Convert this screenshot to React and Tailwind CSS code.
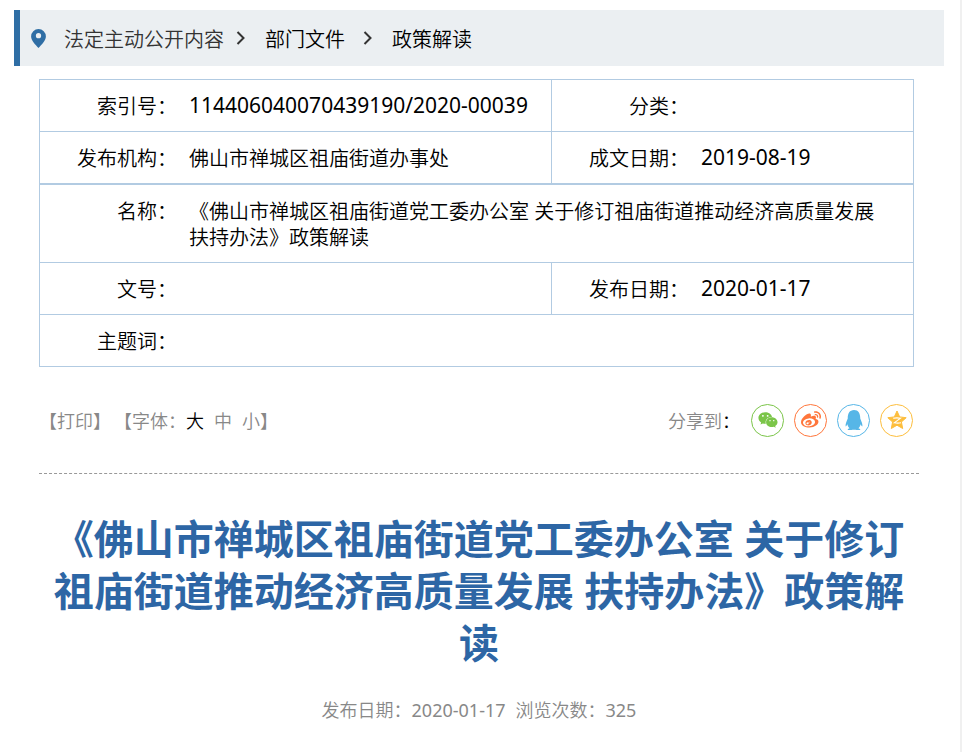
import React from 'react';
import { FaWeixin, FaWeibo, FaQq } from 'react-icons/fa';

const title = '《佛山市禅城区祖庙街道党工委办公室 关于修订祖庙街道推动经济高质量发展 扶持办法》政策解读';

const PinIcon = () => (
  <svg className="w-[15px] h-[19px] shrink-0" viewBox="0 0 14 18" fill="#2f6ea5" aria-hidden="true">
    <path fillRule="evenodd" d="M7 0a7 7 0 0 0-7 7c0 4 4 7.500 7 11 3-3.500 7-7 7-11a7 7 0 0 0-7-7zm0 3.800a2.500 2.500 0 1 1 0 5 2.500 2.500 0 0 1 0-5z" />
  </svg>
);

const Chevron = () => (
  <svg className="w-[9px] h-[14px] mx-3 shrink-0" viewBox="0 0 9 14" fill="none" stroke="#333" strokeWidth="2" aria-hidden="true">
    <path d="M1.500 1l6 6-6 6" />
  </svg>
);

const QzoneIcon = ({ className }) => (
  <svg className={className} viewBox="0 0 20 20" aria-hidden="true">
    <path
      fill="currentColor"
      stroke="currentColor"
      strokeWidth="1"
      strokeLinejoin="round"
      d="M10 1l2.700 5.900 6.500.8-4.800 4.300 1.300 6.500L10 15.200l-5.700 3.300L5.600 12 .8 7.700l6.500-.8z"
    />
    <path fill="none" stroke="#fff" strokeWidth="1.100" d="M6.200 8.200c2.600-.4 5-.4 7.400 0L7.200 12.800c2.600.4 4.500.4 6.800 0" />
  </svg>
);

const Label = ({ children }) => (
  <th scope="row" className="pt-[14px] pb-[10px] pl-3 text-right align-top font-[350] whitespace-nowrap border-b border-[#b2cbe2]">
    {children}
  </th>
);

const share = [
  { name: '微信', icon: FaWeixin, color: 'border-[#7bc549] text-[#7bc549]' },
  { name: '新浪微博', icon: FaWeibo, color: 'border-[#ff763b] text-[#ff763b]' },
  { name: 'QQ', icon: FaQq, color: 'border-[#56b6e7] text-[#56b6e7]' },
  { name: 'QQ空间', icon: QzoneIcon, color: 'border-[#fdbe3d] text-[#fdbe3d]' },
];

const App = () => {
  return (
    <div className="min-h-screen bg-white border-r-2 border-[#f0f0f0] pt-[10px] pl-[14px] pr-4 pb-7 font-['Noto_Sans','Noto_Sans_CJK_SC',sans-serif] text-black">
      {/* Breadcrumb */}
      <nav aria-label="当前位置" className="flex items-center h-14 pl-[11px] bg-[#ebeff2] border-l-[6px] border-[#2f6ea5] text-xl font-[350]">
        <PinIcon />
        <a href="#" className="ml-[18px] pt-[3px] text-[#333]">法定主动公开内容</a>
        <Chevron />
        <a href="#" className="ml-2 pt-[3px]">部门文件</a>
        <span className="ml-1.5"><Chevron /></span>
        <a href="#" className="ml-2 pt-[3px]">政策解读</a>
      </nav>

      <main className="pl-[25px] pr-[25px]">
        {/* Document info */}
        <div className="mt-[13px] pr-[5px]">
          <table className="w-full table-fixed border-separate border-spacing-0 border-t border-x border-[#b2cbe2] text-xl leading-[26px]">
            <colgroup>
              <col className="w-[137px]" />
              <col />
              <col className="w-[137px]" />
              <col className="w-[224px]" />
            </colgroup>
            <tbody>
              <tr className="h-[52px]">
                <Label>索引号：</Label>
                <td className="py-3 pl-3 align-top text-[21px] border-b border-r border-[#b2cbe2]">114406040070439190/2020-00039</td>
                <Label>分类：</Label>
                <td className="border-b border-[#b2cbe2]" />
              </tr>
              <tr className="h-[52px]">
                <Label>发布机构：</Label>
                <td className="pt-[14px] pb-[10px] pl-3 align-top font-[350] border-b border-r border-[#b2cbe2]">佛山市禅城区祖庙街道办事处</td>
                <Label>成文日期：</Label>
                <td className="py-3 pl-3 align-top text-[21px] border-b border-[#b2cbe2]">2019-08-19</td>
              </tr>
              <tr className="h-[79px]">
                <th scope="row" className="pt-[14px] pb-[10px] pl-3 text-right align-top font-[350] border-y border-[#b2cbe2]">名称：</th>
                <td colSpan={3} className="pt-[14px] pb-[10px] pl-3 pr-5 align-top font-[350] border-y border-[#b2cbe2]">{title}</td>
              </tr>
              <tr className="h-[52px]">
                <Label>文号：</Label>
                <td className="border-b border-r border-[#b2cbe2]" />
                <Label>发布日期：</Label>
                <td className="py-3 pl-3 align-top text-[21px] border-b border-[#b2cbe2]">2020-01-17</td>
              </tr>
              <tr className="h-[52px]">
                <Label>主题词：</Label>
                <td colSpan={3} className="border-b border-[#b2cbe2]" />
              </tr>
            </tbody>
          </table>
        </div>

        {/* Print, font size and share tools */}
        <div className="flex items-center justify-between h-[107px] pr-[6px] border-b border-dashed border-[#999] text-lg font-[350] text-[#888]">
          <div className="flex items-center pt-0.5">
            <button type="button">【打印】</button>
            <span className="ml-[3px]">【字体：</span>
            <button type="button" className="text-black">大</button>
            <button type="button" className="ml-[10px]">中</button>
            <button type="button" className="ml-[10px]">小</button>
            <span>】</span>
          </div>
          <div className="flex items-center">
            <span className="pt-0.5">分享到</span>
            <span className="pt-0.5 text-black">：</span>
            <div className="ml-[11px] flex gap-[10px]">
              {share.map(({ name, icon: Icon, color }) => (
                <a key={name} href="#" aria-label={name} className={`size-[33px] rounded-full border flex items-center justify-center ${color}`}>
                  <Icon className="size-5" />
                </a>
              ))}
            </div>
          </div>
        </div>

        {/* Article heading */}
        <h1 className="mt-[39px] text-center text-[40px] leading-[52px] font-bold text-[#2d66a5]">{title}</h1>
        <p className="mt-[27px] text-center text-lg font-[350] text-[#888]">
          <span>发布日期：<span className="font-normal">2020-01-17</span></span>
          <span className="ml-[10px]">浏览次数：<span className="font-normal">325</span></span>
        </p>
      </main>
    </div>
  );
};

export default App;
